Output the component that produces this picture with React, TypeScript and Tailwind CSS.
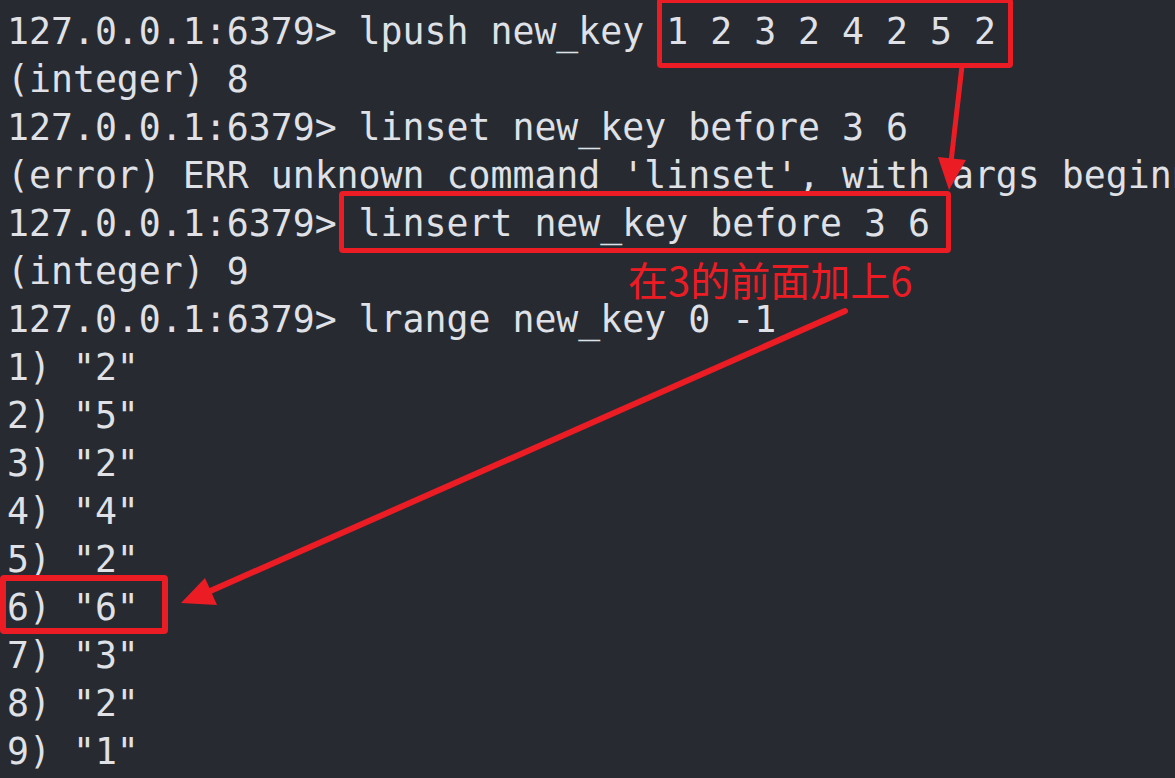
const lines = [
  '127.0.0.1:6379> lpush new_key 1 2 3 2 4 2 5 2',
  '(integer) 8',
  '127.0.0.1:6379> linset new_key before 3 6',
  "(error) ERR unknown command 'linset', with args beginning with: 'new_key' 'before' '3' '6'",
  '127.0.0.1:6379> linsert new_key before 3 6',
  '(integer) 9',
  '127.0.0.1:6379> lrange new_key 0 -1',
  '1) "2"',
  '2) "5"',
  '3) "2"',
  '4) "4"',
  '5) "2"',
  '6) "6"',
  '7) "3"',
  '8) "2"',
  '9) "1"',
]

function Arrows() {
  return (
    <svg className="absolute inset-0 pointer-events-none" width="1175" height="778" viewBox="0 0 1175 778">
      {/* from the lpush values down to the error line */}
      <line x1="962" y1="66" x2="951" y2="162" stroke="#ec1c24" strokeWidth="5" strokeLinecap="round" />
      <polygon points="938,157 966,160 949,190" fill="#ec1c24" />
      {/* from the note down to item 6 */}
      <line x1="845" y1="311" x2="208" y2="592" stroke="#ec1c24" strokeWidth="6" strokeLinecap="round" />
      <polygon points="205,578 217,605 181,603" fill="#ec1c24" />
    </svg>
  )
}

export default function App() {
  return (
    <div className="relative w-[1175px] h-[778px] overflow-hidden bg-[#282a32]">
      <div
        className="flex flex-col pt-2 pl-[7px] text-[36.5px] leading-[48px] text-[#dfe1e6] whitespace-pre"
        style={{ fontFamily: '"DejaVu Sans Mono", "Liberation Mono", monospace' }}
      >
        {lines.map((l, i) => (
          <div key={i}>{l}</div>
        ))}
      </div>

      <div className="absolute left-[657px] top-[-2px] w-[356px] h-[70px] border-[5px] border-[#ec1c24] rounded-[4px]" />
      <div className="absolute left-[339px] top-[191px] w-[612px] h-[62px] border-[5px] border-[#ec1c24] rounded-[4px]" />
      <div className="absolute left-0 top-[575px] w-[168px] h-[59px] border-[6px] border-[#ec1c24] rounded-[4px]" />

      <div
        className="absolute left-[628px] top-[253px] text-[40px] leading-[52px] text-[#ec1c24] whitespace-pre"
        style={{ fontFamily: '"Noto Sans CJK SC", "Noto Sans", sans-serif' }}
      >
        在3的前面加上6
      </div>

      <Arrows />
    </div>
  )
}
